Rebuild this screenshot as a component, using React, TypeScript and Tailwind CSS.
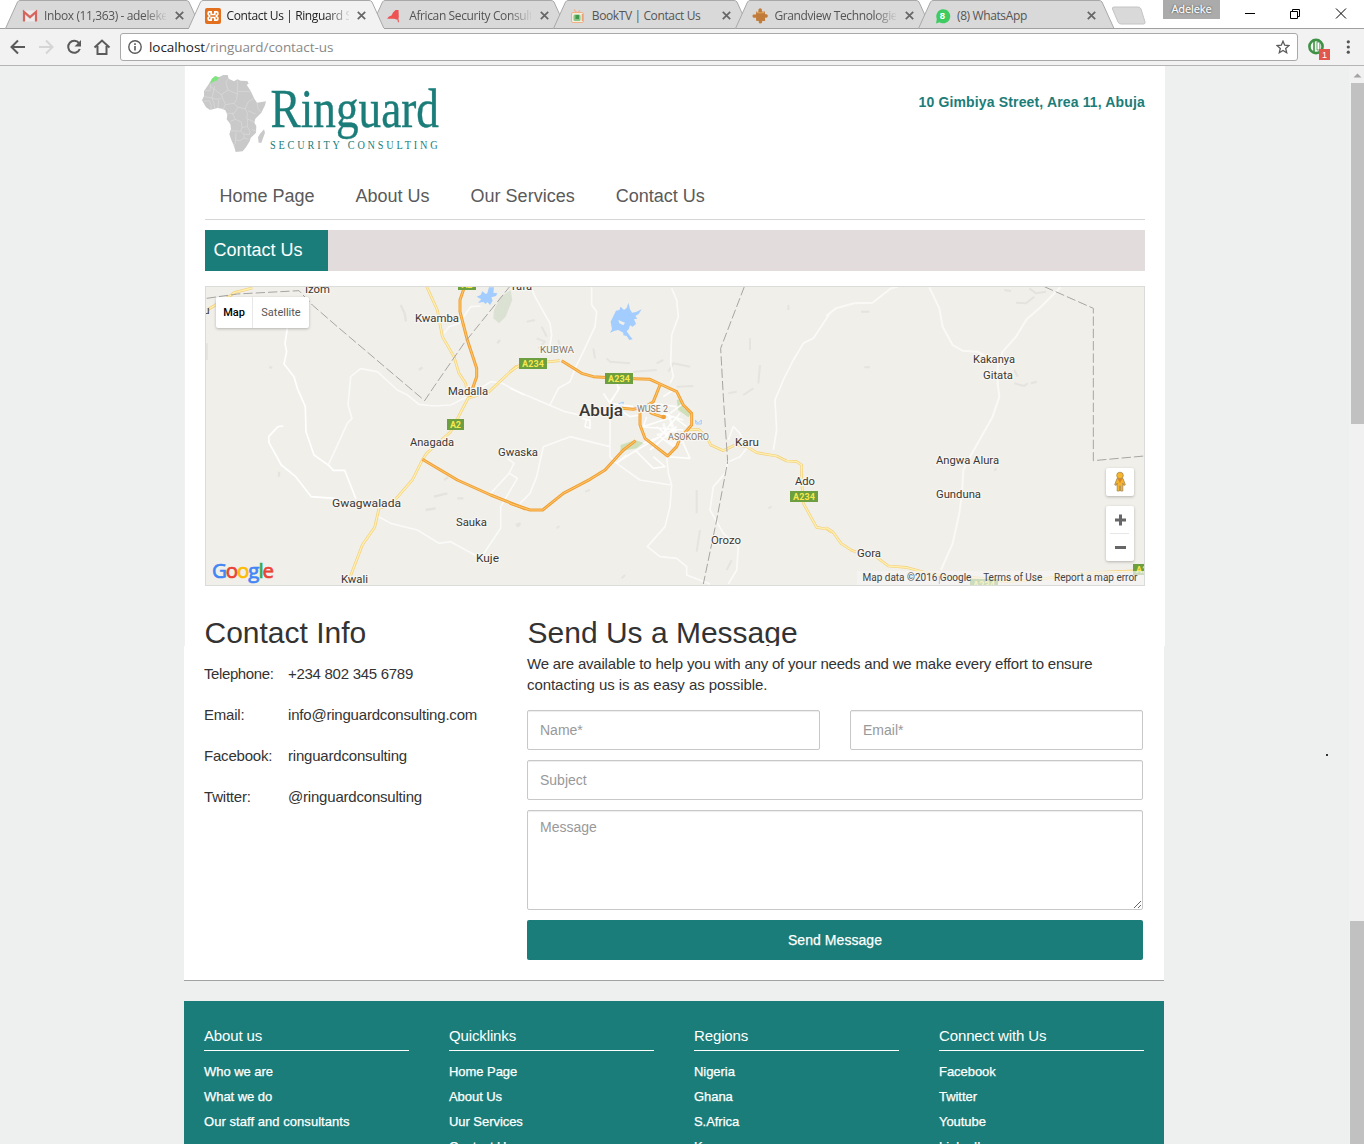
import React from "react";

const SANS = "font-['Liberation_Sans',Arial,sans-serif]";

/* ---------- Browser chrome ---------- */

const GmailIcon = () => (
  <svg width="16" height="16" viewBox="0 0 16 16">
    <rect x="1" y="2.5" width="14" height="11" rx="1" fill="#eceaea" />
    <path d="M2 13.5V4l6 5.2L14 4v9.5" fill="none" stroke="#d5655d" strokeWidth="2.2" />
  </svg>
);

const XamppIcon = () => (
  <svg width="16" height="16" viewBox="0 0 16 16">
    <rect width="16" height="16" rx="2" fill="#e2701f" />
    <path
      d="M4.200 3.800H6.200V6.500H9.800V3.800H11.800Q12.800 3.800 12.800 5V6.200L11.400 8 12.800 9.800V11Q12.800 12.200 11.800 12.200H9.800V9.500H6.200V12.200H4.200Q3.200 12.200 3.200 11V9.800L4.600 8 3.200 6.200V5Q3.200 3.800 4.200 3.800z"
      fill="none"
      stroke="#fff"
      strokeWidth="1.7"
    />
  </svg>
);

const RedMapIcon = () => (
  <svg width="16" height="16" viewBox="0 0 16 16">
    <path d="M.3 10.300 2 8.500 4.500 7.500 6 4.500 8.500 2H11.500L11.800 8.500 11.500 11 12 14 11 14.500 10.500 11.800 7 10.800H.5z" fill="#ee5354" />
  </svg>
);

const TvIcon = () => (
  <svg width="16" height="16" viewBox="0 0 16 16">
    <path d="M4 1.500 7 5l3-2.500" fill="none" stroke="#f3b49a" strokeWidth="1.400" />
    <rect x="1.500" y="4.500" width="12" height="10" rx="1.500" fill="#f3efdc" stroke="#efb187" />
    <rect x="3.500" y="6.500" width="7" height="6.500" rx="1.500" fill="#8cc487" />
    <rect x="5.500" y="7" width="3.500" height="4" fill="#3f9a4d" />
    <path d="M12.300 6v7" stroke="#e98c5d" strokeWidth="1" />
  </svg>
);

const PuzzleIcon = () => (
  <svg width="16" height="16" viewBox="0 0 16 16">
    <path
      d="M4 3.500c1 .5 2 .5 2.500 0C6 1.500 7 .3 8.300.3s2 1.400 1.400 3c1 .5 2 .4 3.300.2-.2 1.200-.2 2 .2 2.800 1.500-.4 2.600.2 2.600 1.600 0 1.500-1.200 2.100-2.600 1.500-.3 1-.3 2 .1 3.300-1.300.4-2.500.4-3.300 0 .5 1.500 0 2.800-1.500 2.800S6.300 14.200 6.900 12.700c-1 .5-2 .3-3.100-.1.4-1.200.4-2.200 0-3C2 10.200.5 9.700.5 8S2 6.200 3.900 6.600c.4-1 .3-2 .1-3.100z"
      fill="#c17c3c"
    />
    <path d="M5 4.500c2 .5 4.500.5 7 0" stroke="#e0aa62" strokeWidth="1" fill="none" />
  </svg>
);

const WhatsAppIcon = () => (
  <svg width="16" height="16" viewBox="0 0 16 16">
    <path d="M1 15.500 1.800 11A7 7 0 1 1 4.500 14.200z" fill="#3ecb62" />
    <text x="7.500" y="11.200" textAnchor="middle" fontSize="9.500" fontWeight="700" fill="#fff" fontFamily="Liberation Sans">
      8
    </text>
  </svg>
);

const TABS = [
  { title: "Inbox (11,363) - adeleke", Icon: GmailIcon, fade: true },
  { title: "Contact Us | Ringuard Se", Icon: XamppIcon, fade: true, active: true },
  { title: "African Security Consult", Icon: RedMapIcon, fade: true },
  { title: "BookTV | Contact Us", Icon: TvIcon },
  { title: "Grandview Technologies", Icon: PuzzleIcon, fade: true },
  { title: "(8) WhatsApp", Icon: WhatsAppIcon },
];

function Tab({ title, Icon, fade, active }: { title: string; Icon: React.FC; fade?: boolean; active?: boolean }) {
  return (
    <div className={active ? "relative z-10 h-[29px] w-[182.6px] shrink-0" : "relative h-[29px] w-[182.6px] shrink-0"}>
      <svg className="absolute left-0 top-0" width="198" height="29" viewBox="0 0 198 29">
        <path
          d="M.5 28.500 12.500 2Q13.500.5 15 .5H181Q183 .5 184 2L196 28.500"
          fill={active ? "#f2f2f2" : "#d9d9d9"}
          stroke="#a8a8a8"
        />
        <path d="M1 28.500H196" stroke={active ? "#f2f2f2" : "#a0a0a0"} />
      </svg>
      <div className="relative flex h-full items-center pl-[17px] pt-0.5">
        <Icon />
        <div className="ml-1.5 h-[18px] w-[122px] overflow-hidden">
          <span
            className={
              (active ? "text-[#222]" : "text-[#555]") +
              (fade ? " [mask-image:linear-gradient(to_right,black_100px,transparent_124px)]" : "") +
              " block w-[122px] overflow-hidden whitespace-nowrap font-['Open_Sans','Noto_Sans',sans-serif] text-[12px] leading-[17px] tracking-[-0.38px]"
            }
          >
            {title}
          </span>
        </div>
        <svg className="ml-[8.500px]" width="9" height="9" viewBox="0 0 9 9">
          <path d="M.8.8 8.200 8.200M8.200.8.8 8.200" stroke="#666" strokeWidth="1.700" />
        </svg>
      </div>
    </div>
  );
}

function BrowserChrome() {
  return (
    <div className="h-[66px] shrink-0">
      <div className="flex h-[29px] border-b border-[#a0a0a0] bg-white pl-[5px]">
        {TABS.map((t) => (
          <Tab key={t.title} {...t} />
        ))}
        <svg className="ml-[10.400px] mt-[6px] shrink-0" width="36" height="19" viewBox="0 0 36 19">
          <path d="M3 1h24q2 0 3 2l4 13q.5 2-1.500 2H10q-2 0-3-2L1.500 3Q1 1 3 1z" fill="#d9d9d9" stroke="#c4c4c4" />
        </svg>
        <div className="ml-[16px] h-[19px] w-[57px] shrink-0 bg-[#ababab] text-center font-['Open_Sans',sans-serif] text-[11px] leading-[18px] tracking-[-0.1px] text-white [text-shadow:0_0_2px_#333,0_0_1px_#333] [-webkit-text-stroke:0.3px_white]">
          Adeleke
        </div>
        <svg className="ml-[25px] mt-[8px] shrink-0" width="103" height="12" viewBox="0 0 103 12">
          <g fill="none" stroke="#000">
            <path d="M0 5.500h10" />
            <path d="M45.500 3.500h7v7h-7zM47.500 3.500v-2h7v7h-2" />
            <path d="M91 .5l10 10M101 .5l-10 10" />
          </g>
        </svg>
      </div>
      <div className="flex h-[37px] items-center border-b border-[#b5b5b5] bg-[#f2f2f2]">
        <svg className="shrink-0" width="120" height="36" viewBox="0 0 120 36">
          <g fill="none" strokeWidth="2">
            <path d="M25 18H12M18 11.500 11.500 18 18 24.500" stroke="#5a5a5a" />
            <path d="M39 18H52M46 11.500 52.500 18 46 24.500" stroke="#d5d5d5" />
            <path d="M79 14.200A6 6 0 1 0 79.800 20" stroke="#5a5a5a" />
            <path d="M94.500 18.500 102 11.500l7.500 7M97.500 17v8h9v-8" stroke="#5a5a5a" />
          </g>
          <path d="M81 11v6.500h-6.500z" fill="#5a5a5a" />
        </svg>
        <div className="flex h-[28px] w-[1178px] items-center rounded-[3px] border border-[#a9a9a9] bg-white pl-[7px] pr-[7px]">
          <svg width="14" height="14" viewBox="0 0 14 14">
            <circle cx="7" cy="7" r="6.200" fill="none" stroke="#5a5a5a" strokeWidth="1.400" />
            <path d="M7 6v4.500M7 3.300v1.600" stroke="#5a5a5a" strokeWidth="1.600" />
          </svg>
          <span className="ml-[7px] flex-1 font-['Open_Sans','Noto_Sans',sans-serif] text-[13.500px] leading-[18px] tracking-[-0.060px] text-[#888]">
            <span className="text-[#222]">localhost</span>/ringuard/contact-us
          </span>
          <svg width="14" height="14" viewBox="0 0 14 14">
            <path
              d="M7 1.200 8.700 5.200l4.300.4-3.300 2.800 1 4.300L7 10.400l-3.700 2.300 1-4.300L1 5.600l4.300-.4z"
              fill="none"
              stroke="#5a5a5a"
              strokeWidth="1.300"
            />
          </svg>
        </div>
        <svg className="ml-[10px] shrink-0" width="50" height="26" viewBox="0 0 50 26">
          <circle cx="8" cy="12.500" r="6.600" fill="#f2f7f1" stroke="#3f9146" strokeWidth="2.600" />
          <path d="M6 7v11" stroke="#3f9146" strokeWidth="1.600" />
          <path d="M9 8h2.800v8H9z" fill="#fff" stroke="#3f9146" strokeWidth=".8" />
          <rect x="11" y="15" width="11" height="11" fill="#e2574c" />
          <text x="16.500" y="24" fontSize="9" fill="#fff" textAnchor="middle" fontFamily="Liberation Sans">
            1
          </text>
          <g fill="#555">
            <circle cx="40.300" cy="7.800" r="1.600" />
            <circle cx="40.300" cy="13" r="1.600" />
            <circle cx="40.300" cy="18.200" r="1.600" />
          </g>
        </svg>
      </div>
    </div>
  );
}

/* ---------- Logo ---------- */

function Logo() {
  return (
    <svg width="260" height="90" viewBox="199 70 260 90" role="img" aria-label="Ringuard Security Consulting">
      <g transform="translate(184 66) scale(.33333)">
        <path
          d="M84 38 93 30 104 34 118 27H131L134 38 150 46 160 40 170 44 190 45 194 53 188 56 200 75 211 98 219 110 246 106 243 118 232 140 214 158 211 170 217 180 216 200 200 216 197 226 186 244 176 256 155 258 150 240 142 222 136 205 141 188 139 174 128 160 130 146 124 133 114 128 100 126 78 132 66 124 54 103 60 90V75L72 58zM240 190 243 200 232 230 224 230 222 214 228 203z"
          fill="#c9c9c9"
        />
        <path d="M78 53 84 38 94 31 105 34 100 43 88 47z" fill="#7be77b" />
        <g fill="none" stroke="#dedede" strokeWidth="1.800">
          <path d="M60 74H78L80 54M78 60 112 86 132 72 126 50 132 38M132 72 160 84V44M160 76H200M160 84 158 100 150 112 124 116 112 86M60 92 84 96 96 100 112 98M60 106 76 104 82 118 80 131M84 96 90 112 92 128M104 102 102 126M124 116 118 130M150 112 162 124 184 128 192 108 208 98M130 142H150L162 124M184 128 190 142 188 158 212 168M219 110 222 128 230 138M192 134 214 144M139 166 154 160 172 168 174 184 190 182 190 160M138 194 170 196 174 184M190 182 198 196 196 206 180 204 170 196M216 196 204 190M156 200 154 232 150 238M154 222 168 224 180 216 180 204M180 216 194 220M92 60 84 96M144 140 154 160" />
        </g>
      </g>
      <g fill="#1b7d79" fontFamily="Liberation Serif, Times New Roman, serif">
        <text x="270.500" y="126.800" fontSize="54" textLength="168.500" lengthAdjust="spacingAndGlyphs" stroke="#1b7d79" strokeWidth=".4">
          Ringuard
        </text>
        <text transform="translate(270 149.300) scale(.82 1)" fontSize="12.500" textLength="204.500">
          SECURITY CONSULTING
        </text>
      </g>
    </svg>
  );
}

/* ---------- Map ---------- */

const PLACES: { n: string; x: number; y: number; w: number; s?: number; c?: string; b?: number }[] = [
  { n: "Izom", x: 305, y: 293, w: 25 },
  { n: "Tafa", x: 510, y: 290, w: 22 },
  { n: "Kwamba", x: 415, y: 322, w: 44 },
  { n: "Madalla", x: 448, y: 395, w: 40 },
  { n: "Anagada", x: 410, y: 446, w: 44 },
  { n: "Gwaska", x: 498, y: 456, w: 40 },
  { n: "Gwagwalada", x: 332, y: 507, w: 69 },
  { n: "Sauka", x: 456, y: 526, w: 31 },
  { n: "Kuje", x: 476, y: 562, w: 23 },
  { n: "Kwali", x: 341, y: 583, w: 27 },
  { n: "KUBWA", x: 540, y: 352.500, w: 34, s: 9.500, c: "#857767" },
  { n: "WUSE 2", x: 637, y: 411.500, w: 31, s: 8.500, c: "#857767" },
  { n: "ASOKORO", x: 668, y: 439.500, w: 41, s: 9, c: "#857767" },
  { n: "Abuja", x: 579, y: 416, w: 44, s: 17, b: 500 },
  { n: "Karu", x: 735, y: 446, w: 24 },
  { n: "Ado", x: 795, y: 485, w: 20 },
  { n: "Orozo", x: 711, y: 544, w: 30 },
  { n: "Gora", x: 857, y: 557, w: 24 },
  { n: "Kakanya", x: 973, y: 363, w: 42 },
  { n: "Gitata", x: 983, y: 379, w: 30 },
  { n: "Angwa Alura", x: 936, y: 464, w: 63 },
  { n: "Gunduna", x: 936, y: 498, w: 45 },
];

const SHIELDS = [
  { n: "A2", x: 458, y: 279, w: 18 },
  { n: "A2", x: 447, y: 419, w: 17 },
  { n: "A234", x: 519, y: 358, w: 28 },
  { n: "A234", x: 605, y: 373, w: 28 },
  { n: "A234", x: 790, y: 491, w: 28 },
  { n: "A234", x: 970, y: 579, w: 28 },
  { n: "A234", x: 1133, y: 564, w: 28 },
];

const GOOGLE = [
  ["G", "#4285f4"],
  ["o", "#ea4335"],
  ["o", "#fbbc05"],
  ["g", "#4285f4"],
  ["l", "#34a853"],
  ["e", "#ea4335"],
];

const Road = ({ d, major }: { d: string; major?: boolean }) => (
  <>
    <path d={d} stroke={major ? "#f0a037" : "#f3cf7b"} strokeWidth={major ? 9 : 8} />
    <path d={d} stroke={major ? "#ffc86a" : "#fff0b0"} strokeWidth={major ? 3 : 4} />
  </>
);

function MapDrawing() {
  return (
    <svg className="block" width="938" height="298" viewBox="206 287 938 298">
      <rect x="206" y="287" width="938" height="298" fill="#f0efea" />
      <g fill="none" strokeLinejoin="round">
        {/* western district */}
        <g transform="translate(204 280) scale(.33333)">
          <path d="M870 90 890 50 920 30 925 60 905 110 885 130 868 115z" fill="#dbe2d3" />
          <path d="M818 50 830 45 835 34 845 42 850 40 855 22H870L868 38 880 40 876 48 862 52 866 62 858 75 850 66 845 72 838 66 822 68 832 58z" fill="#a3ccff" />
          <g stroke="#e4e3de" strokeWidth="7">
            <path d="M590 75 602 100 606 124M720 600 732 592M690 650 730 640M665 690 695 685M760 655 778 655M935 735 950 730M645 270 655 262M195 262 205 262M225 575V590M8 190V240M880 190 888 180" />
          </g>
          <g stroke="#fff" strokeWidth="5">
            <path d="M250 145 243 190 248 215 240 252 270 290 280 325 304 380 306 455 330 525 375 557 388 571H422L456 657M238 438 222 440 194 470 195 488 232 555 275 590 322 650 392 655" />
            <path
              d="M372 557 430 430 444 415 432 375 440 290 470 266 520 275 580 330 610 345 645 373 690 378 740 375 800 345 860 305 893 309 960 345M720 160 735 140 765 130 800 80 830 78M520 708 560 730 640 750 705 790 740 785 830 835 890 745V680L940 595 915 580 930 550 910 535M860 640 915 580"
              opacity=".65"
            />
          </g>
          <Road d="M10 90 75 50 90 38 145 24M668 20 700 90 715 170 750 230 765 280 785 310 792 350M435 900 475 795 512 742 525 685 560 675 625 600 655 540 668 520 740 455 792 355 855 335 935 260 965 255" />
          <Road d="M780 25 768 60V95L790 180 818 265V290L797 350M655 538 760 600 860 645 965 687" major />
          <path d="M8 55 100 42 285 32 325 75 400 140 662 362 690 320 780 190 925 10" stroke="#a6a5a1" strokeWidth="3" strokeDasharray="28 9" />
        </g>
        {/* city and inner roads */}
        <g transform="translate(510 280) scale(.33333)">
          <path
            d="M300 158 306 148 302 125 318 92 328 90 332 80 342 90 350 84 355 68 360 88 366 98 378 96 395 88 386 102 376 108 382 116 372 118 378 132 368 140 360 136 356 148 350 154 360 168 368 178 358 180 350 168 340 166V158L325 150 314 152z"
            fill="#a3ccff"
          />
          <path d="M325 120 345 128 340 136 328 130z" fill="#f0efea" />
          <path d="M325 372 340 366 338 378zM556 420 564 430 574 420V432H558z" stroke="#a3ccff" strokeWidth="3" />
          <path d="M332 495 375 480 400 488 380 505 350 510 330 525zM500 360 512 358 522 385 545 400 535 412 505 390z" fill="#cfdfba" />
          <g stroke="#e5e4df" strokeWidth="6">
            <path d="M50 125 75 120M95 140 110 170M80 175 105 185 85 205M120 222 150 200 145 180M250 205 255 235M290 235 300 245 360 250M370 275 440 270M475 275 490 250 540 260M440 250 460 240M500 320 550 318M720 175V210M750 255 745 310M655 340 680 335M700 345 730 325M560 630V700M570 750 560 815M225 635 240 630M20 740 30 735M140 745 148 738M335 895 345 885M650 870 665 840M775 685 785 680M835 75V90" />
          </g>
          <g stroke="#fff" strokeWidth="5">
            <path
              d="M245 22V75L260 95 255 140 220 215 200 255 180 305 145 325 120 375M65 25 75 50 120 130 125 165 115 225M0 325 105 370 165 395 240 412 300 390V530L320 550 390 600 482 615M300 500 180 470 100 500 80 590 60 640 30 670M485 25 500 60 505 110 485 165 482 250 490 290 480 310M470 530 475 580 485 615 480 680 465 740 412 800 450 830 500 835 530 860V885L600 912M655 540 645 580 610 620 600 690 640 760 685 800 680 870 655 912M655 545 690 530 710 505 690 460 670 440 655 480M790 510 800 450 795 360 820 300 850 240 880 190 910 175 960 100"
              opacity=".7"
            />
            <path
              d="M320 548 380 510 450 470 510 400M400 490 450 470 490 500M385 440 520 450M420 510 500 440M440 440 500 490M455 400 520 420M410 410 400 440 490 410 530 440M460 350 490 330 520 370 480 400M430 370 500 380M280 340 300 370 330 320M285 310 320 300 325 330 300 365M370 380 300 370 360 410 390 405M215 415 240 420V445L225 440 230 415M375 510 430 565 465 560 430 530M520 490 540 535 470 530M320 550 350 525"
              opacity=".85"
            />
            <path d="M460 430 475 480 500 500M470 390 500 470M480 430 520 490M440 465 500 450" strokeWidth="8" opacity=".7" />
          </g>
          <Road d="M0 275 30 255 90 248 150 242M530 450 565 448 590 470 602 495 640 512 675 495 710 500 740 518 800 528 830 543 860 545 875 555V605L880 670 920 742 950 747 965 757" />
          <Road
            d="M155 242 215 280 250 290 330 295 420 298 450 312 500 335 520 375 545 400V435L510 475 500 500 473 528 405 475 390 435V390L430 365 450 315M335 385 370 388 400 382 425 400 460 412 463 406M0 670 60 690H98L160 640 240 598 285 570 340 510 377 482"
            major
          />
          <circle cx="461" cy="411" r="7" fill="#f0a037" />
          <path d="M703 20 632 205 640 350 653 545 620 720 580 912" stroke="#a6a5a1" strokeWidth="3" strokeDasharray="28 9" />
        </g>
        {/* eastern district */}
        <g transform="translate(826 280) scale(.33333)">
          <g stroke="#e4e3de" strokeWidth="6">
            <path d="M535 30 555 33M570 68 600 70 625 50M610 25 630 40 660 35M105 95 130 95M115 262 132 262M565 310 595 318 605 310M615 310 632 305M565 270 575 290M505 572 512 565" />
          </g>
          <g stroke="#faf9f6" strokeWidth="6">
            <path d="M0 108 30 85 85 70 140 68 195 25 215 20M310 22 340 85 350 140 380 195 410 212 455 215 480 230M703 22 640 85 602 118 570 170 530 215 515 260V310L520 350 500 410 435 525 412 570 408 640 400 700 380 790 345 870" />
          </g>
          <Road d="M0 743 20 755 45 790 75 810 100 820 150 830 187 858 240 862 300 878 360 890 440 892 540 905 640 898 770 880 870 875 955 872" />
          <path d="M655 20 802 85V542L955 528" stroke="#a6a5a1" strokeWidth="3" strokeDasharray="28 9" />
          <path d="M340 888V912" stroke="#555" strokeWidth="3" />
        </g>
      </g>
      {SHIELDS.map((s) => (
        <g key={s.x}>
          <rect x={s.x} y={s.y} width={s.w} height="11" fill="#6d9e3f" />
          <text
            x={s.x + s.w / 2}
            y={s.y + 9}
            textAnchor="middle"
            fontSize="9"
            fontWeight="700"
            fill="#f7e84c"
            fontFamily="Roboto"
            textLength={s.n === "A2" ? 11 : 22}
          >
            {s.n}
          </text>
        </g>
      ))}
      {PLACES.map((p) => (
        <text
          key={p.n}
          x={p.x}
          y={p.y}
          textLength={p.w}
          lengthAdjust="spacingAndGlyphs"
          fontSize={p.s ?? 11}
          fontWeight={p.b ?? 400}
          fill={p.c ?? "#3b3733"}
          stroke="#f7f6f2"
          strokeWidth="2.500"
          strokeLinejoin="round"
          paintOrder="stroke"
          fontFamily="Roboto, sans-serif"
        >
          {p.n}
        </text>
      ))}
      <text x="203.500" y="314" fontSize="11" fill="#3b3733" fontFamily="Roboto">
        u
      </text>
      <text x="212" y="577.500" fontSize="20.500" textLength="62" fontWeight="500" fontFamily="Open Sans">
        {GOOGLE.map(([ch, color], i) => (
          <tspan key={i} fill={color} stroke={color} strokeWidth=".7">
            {ch}
          </tspan>
        ))}
      </text>
    </svg>
  );
}

function MapPanel() {
  return (
    <div className="relative mt-[15px] h-[300px] w-[940px] overflow-hidden border border-[#dadcd9] font-['Roboto',sans-serif]">
      <MapDrawing />
      <div className="absolute left-[10px] top-[10px] flex h-[31px] w-[93px] rounded-[2px] bg-white text-[11px] leading-[31px] shadow-[0_1px_3px_rgba(0,0,0,0.25)]">
        <span className="w-[37px] border-r border-[#e8e8e8] text-center font-medium text-black">Map</span>
        <span className="flex-1 text-center text-[#565656]">Satellite</span>
      </div>
      <div className="absolute right-[10px] top-[181px] flex h-7 w-7 items-center justify-center rounded-[2px] bg-white shadow-[0_1px_3px_rgba(0,0,0,0.25)]">
        <svg width="14" height="22" viewBox="0 0 14 22">
          <path
            d="M4 7.500h6l2.300 6.300-1.500.6-1-2.400V20H7.500V15H6.500V20H4.200v-8l-1 2.400-1.500-.6z"
            fill="#f5b32e"
            stroke="#a8884f"
            strokeWidth=".8"
          />
          <circle cx="7" cy="4.500" r="3.300" fill="#f7b52c" stroke="#a8884f" strokeWidth=".8" />
          <path d="M5 8h4l-2 3.500z" fill="#e0852a" stroke="#d98b22" strokeWidth=".6" />
        </svg>
      </div>
      <div className="absolute right-[10px] top-[219px] flex h-[55px] w-7 flex-col items-center rounded-[2px] bg-white shadow-[0_1px_3px_rgba(0,0,0,0.25)]">
        <svg width="28" height="55" viewBox="0 0 28 55">
          <path d="M14.500 8.500v11M9 14h11M9 41.500h11" stroke="#666" strokeWidth="3" />
          <path d="M4 27.500h19" stroke="#e6e6e6" />
        </svg>
      </div>
      <div className="absolute bottom-0 right-0 flex h-[14px] w-[287px] items-center justify-between bg-[#f5f5f5]/70 pl-[5.500px] pr-[6.500px] text-[10px] leading-[14px] text-[#444]">
        <span>Map data ©2016 Google</span>
        <span>Terms of Use</span>
        <span>Report a map error</span>
      </div>
    </div>
  );
}

/* ---------- Page ---------- */

const CONTACTS = [
  ["Telephone:", "+234 802 345 6789"],
  ["Email:", "info@ringuardconsulting.com"],
  ["Facebook:", "ringuardconsulting"],
  ["Twitter:", "@ringuardconsulting"],
];

const FOOTER = [
  { title: "About us", links: ["Who we are", "What we do", "Our staff and consultants"] },
  { title: "Quicklinks", links: ["Home Page", "About Us", "Uur Services", "Contact Us"] },
  { title: "Regions", links: ["Nigeria", "Ghana", "S.Africa", "Kenya"] },
  { title: "Connect with Us", links: ["Facebook", "Twitter", "Youtube", "LinkedIn"] },
];

const FIELD =
  "w-full rounded-[2px] border border-[#c8c8c8] bg-white px-3 text-[14px] text-[#555] shadow-[inset_0_1px_1px_rgba(0,0,0,0.075)] outline-none placeholder:text-[#999] placeholder:opacity-100";

function UpperPage() {
  return (
    <div className="h-[580px] w-[981px] overflow-hidden border-l border-[#f1f1f1] bg-white pl-5">
      <div className="flex h-[109px] items-start justify-between">
        <div className="-ml-[6px] mt-1">
          <Logo />
        </div>
        <div className="mr-5 mt-[27px] text-[14px] font-bold leading-[18px] tracking-[0.15px] text-[#1b7d79]">
          10 Gimbiya Street, Area 11, Abuja
        </div>
      </div>
      <nav className="flex h-[45px] w-[940px] gap-[41px] border-b border-[#d6d6d6] pl-[14.500px] pt-[10px] text-[18px] leading-[22px] text-[#5a5a5a]">
        <a>Home Page</a>
        <a>About Us</a>
        <a>Our Services</a>
        <a>Contact Us</a>
      </nav>
      <div className="mt-[10px] flex h-[41px] w-[940px] bg-[#e2dcdc]">
        <h1 className="w-[123px] bg-[#1b7d79] pl-[8.500px] text-[18px] leading-[40px] text-white">Contact Us</h1>
      </div>
      <MapPanel />
      <div className="mt-[29px] flex text-[30px] leading-[36px] text-[#333]">
        <h2 className="-ml-[0.5px] w-[323px]">Contact Info</h2>
        <h2 className="whitespace-nowrap">Send Us a Message</h2>
      </div>
    </div>
  );
}

function LowerPage() {
  return (
    <div className="flex h-[335px] w-[980px] border-b border-[#a2a2a2] bg-white pl-5 text-[15px] text-[#333]">
      <dl className="mt-[17px] w-[323px] tracking-[-0.2px]">
        {CONTACTS.map(([k, v]) => (
          <div key={k} className="flex h-[41px] leading-[22px]">
            <dt className={k === "Telephone:" ? "w-[84px] tracking-[-0.4px]" : "w-[84px]"}>{k}</dt>
            <dd className={v.startsWith("+") ? "tracking-[-0.28px]" : ""}>{v}</dd>
          </div>
        ))}
      </dl>
      <div className="mt-[7px] w-[616px]">
        <p className="h-[57px] leading-[21px]">
          <span className="block tracking-[-0.195px]">
            We are available to help you with any of your needs and we make every effort to ensure
          </span>
          <span className="block tracking-[-0.06px]">contacting us is as easy as possible.</span>
        </p>
        <div className="grid grid-cols-2 gap-x-[30px] gap-y-[10px]">
          <input className={FIELD + " h-10"} placeholder="Name*" />
          <input className={FIELD + " h-10"} placeholder="Email*" />
          <input className={FIELD + " col-span-2 h-10"} placeholder="Subject" />
          <textarea className={FIELD + " col-span-2 block h-[100px] py-[6px] leading-5"} placeholder="Message" />
          <button className="col-span-2 h-10 rounded-[2px] bg-[#1b7d79] text-[14px] tracking-[0.060px] text-white [-webkit-text-stroke:0.25px_white]">
            Send Message
          </button>
        </div>
      </div>
    </div>
  );
}

function Footer() {
  return (
    <footer className="mt-5 flex h-[143px] w-[980px] gap-10 overflow-hidden bg-[#1b7d79] pl-5 pt-[25px] text-white">
      {FOOTER.map((c) => (
        <div key={c.title} className="w-[205px]">
          <h3 className="h-[25px] border-b border-white text-[15px] leading-[20px] tracking-[-0.13px]">{c.title}</h3>
          <ul className="mt-[8px] text-[13px] leading-[25px] [-webkit-text-stroke:0.25px_white]">
            {c.links.map((l) => (
              <li key={l} className={l.startsWith("Our") ? "tracking-[0.050px]" : "tracking-[-0.050px]"}>
                {l}
              </li>
            ))}
          </ul>
        </div>
      ))}
    </footer>
  );
}

export default function App() {
  return (
    <div className={"flex h-[1144px] w-[1364px] flex-col overflow-hidden bg-[#eef0f0] " + SANS}>
      <BrowserChrome />
      <div className="flex flex-1">
        <div className="w-[184px] shrink-0" />
        <main className="flex-1">
          <UpperPage />
          <LowerPage />
          <Footer />
        </main>
        <div className="mt-[688px] h-[2px] w-[2px] bg-[#333]" />
        <div className="ml-[21px] flex w-[15px] shrink-0 flex-col items-end bg-[#f1f1f1]">
          <svg width="13" height="17" viewBox="0 0 13 17">
            <path d="M2.500 11.500 6.500 7.500l4 4z" fill="#a3a3a3" />
          </svg>
          <div className="h-[341px] w-[13px] bg-[#c1c1c1]" />
          <div className="mt-[497px] w-[14px] flex-1 bg-[#c1c1c1]" />
        </div>
      </div>
    </div>
  );
}
